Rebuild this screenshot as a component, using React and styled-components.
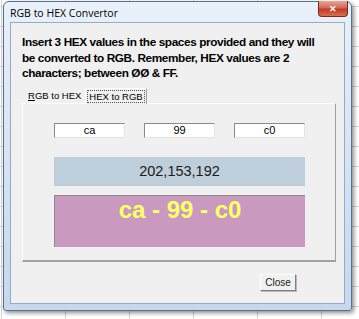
import React from "react";
import { styled, createGlobalStyle } from "styled-components";

const hexValues = ["ca", "99", "c0"];

export default function App() {
    const rgb = hexValues.map((h) => parseInt(h, 16)).join(",");

    return (
        <>
            <GlobalStyle />
            <Window>
                <TitleBar>
                    <Title>RGB to HEX Convertor</Title>
                    <CloseX>✕</CloseX>
                </TitleBar>
                <Client>
                    <Intro>
                        Insert 3 HEX values in the spaces provided and they will
                        <br />
                        be converted to RGB. Remember, HEX values are 2
                        <br />
                        characters; between ØØ &amp; FF.
                    </Intro>

                    <Tabs>
                        <Tab>
                            <u>R</u>GB to HEX
                        </Tab>
                        <Tab $active>
                            <Focus>HEX to RGB</Focus>
                        </Tab>
                    </Tabs>

                    <Panel>
                        <Inputs>
                            {hexValues.map((h) => (
                                <HexInput key={h} value={h} readOnly />
                            ))}
                        </Inputs>
                        <RgbBox>{rgb}</RgbBox>
                        <Swatch $color={"#" + hexValues.join("")}>
                            {hexValues.join(" - ")}
                        </Swatch>
                    </Panel>

                    <Footer>
                        <Button>Close</Button>
                    </Footer>
                </Client>
            </Window>
        </>
    );
}

const GlobalStyle = createGlobalStyle`
    html, body {
        margin: 0;
        height: 100%;
    }
    body {
        background-color: #ffffff;
        background-image:
            linear-gradient(to right, #d4d4d4 1px, transparent 1px),
            linear-gradient(to bottom, #d4d4d4 1px, transparent 1px);
        background-size: 64px 20px;
        background-position: 1px 6px;
        font-family: "Liberation Sans", Arial, sans-serif;
        overflow: hidden;
    }
`;

const Window = styled.div`
    margin: 1px 0 0 3px;
    width: 349px;
    height: 310px;
    box-sizing: border-box;
    padding: 0 6px 6px 6px;
    display: flex;
    flex-direction: column;
    border-radius: 6px 6px 3px 3px;
    border: 1px solid #5a6f8a;
    background: linear-gradient(to bottom, #e9f1fa 0%, #d9e6f4 40%, #c5d8ee 100%);
    box-shadow: 2px 2px 4px rgba(0, 0, 0, 0.45);
`;

const TitleBar = styled.div`
    height: 20px;
    display: flex;
    align-items: center;
    justify-content: space-between;
    position: relative;
`;

const Title = styled.span`
    font-family: "Open Sans", "Liberation Sans", sans-serif;
    font-size: 10.5px;
    color: #000;
    margin-top: 2px;
`;

const CloseX = styled.span`
    position: absolute;
    top: -1px;
    right: -3px;
    width: 28px;
    height: 15px;
    display: flex;
    align-items: center;
    justify-content: center;
    font-size: 9px;
    font-weight: bold;
    color: #fff;
    border: 1px solid #7a2a22;
    border-top: none;
    border-radius: 0 0 4px 4px;
    background: linear-gradient(to bottom, #e8a597 0%, #d26a56 45%, #c23a25 55%, #d9704e 100%);
`;

const Client = styled.div`
    flex: 1;
    display: flex;
    flex-direction: column;
    background: #f0f0f0;
    border: 1px solid #95aac4;
    padding: 0 8px 0 11px;
`;

const Intro = styled.p`
    margin: 12px 0 0 0;
    font-size: 11.8px;
    font-weight: bold;
    letter-spacing: -0.4px;
    line-height: 15.5px;
    color: #000;
    white-space: nowrap;
`;

const Tabs = styled.div`
    display: flex;
    align-items: flex-end;
    margin-top: 6px;
    height: 15px;
    padding-left: 4px;
    gap: 2px;
`;

const Tab = styled.div`
    font-size: 9.5px;
    color: #000;
    padding: 1px;
    margin-bottom: ${(p) => (p.$active ? "-1px" : "1px")};
    background: #f0f0f0;
    border: 1px solid ${(p) => (p.$active ? "#a0a0a0" : "transparent")};
    border-bottom: none;
    border-top-color: ${(p) => (p.$active ? "#fff" : "transparent")};
    border-left-color: ${(p) => (p.$active ? "#fff" : "transparent")};
    position: relative;
    z-index: 1;
`;

const Focus = styled.span`
    display: inline-block;
    padding: 0 1px;
    border: 1px dotted #555;
`;

const Panel = styled.div`
    height: 159px;
    box-sizing: border-box;
    border: 1px solid #a0a0a0;
    border-top-color: #fff;
    border-left-color: #fff;
    border-bottom: 2px solid #a0a0a0;
    padding: 19px 0 0 31px;
    display: flex;
    flex-direction: column;
`;

const Inputs = styled.div`
    display: grid;
    grid-template-columns: 71px 71px 71px;
    column-gap: 19px;
`;

const HexInput = styled.input`
    box-sizing: border-box;
    width: 71px;
    height: 15px;
    padding: 0;
    font-family: "Liberation Sans", Arial, sans-serif;
    font-size: 11px;
    text-align: center;
    color: #000;
    background: #fff;
    border: 1px solid #e3e3e3;
    border-top-color: #8a8a8a;
    border-left-color: #8a8a8a;
    outline: none;
`;

const RgbBox = styled.div`
    margin-top: 19px;
    width: 251px;
    height: 29px;
    display: flex;
    align-items: center;
    justify-content: center;
    background: #bfcedb;
    font-size: 14.5px;
    color: #1a1a1a;
`;

const Swatch = styled.div`
    margin-top: 9px;
    width: 251px;
    height: 52px;
    box-sizing: border-box;
    background: ${(p) => p.$color};
    border-top: 1px solid #8c8c8c;
    border-left: 1px solid #8c8c8c;
    font-size: 24px;
    font-weight: bold;
    color: #ffff66;
    text-align: center;
    line-height: 27px;
`;

const Footer = styled.div`
    display: flex;
    justify-content: flex-end;
    padding: 12px 40px 0 0;
`;

const Button = styled.button`
    width: 36px;
    height: 17px;
    padding: 0;
    font-family: "Liberation Sans", Arial, sans-serif;
    font-size: 10px;
    color: #222;
    background: #f0f0f0;
    border: 1px solid #fff;
    border-right-color: #808080;
    border-bottom-color: #808080;
    box-shadow: 1px 1px 0 #b8b8b8;
`;
